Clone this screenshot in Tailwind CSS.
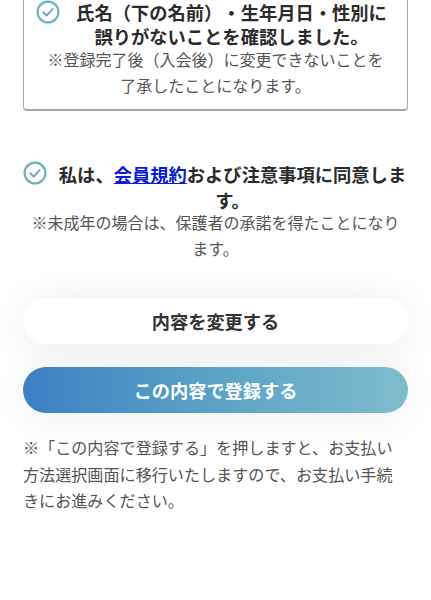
<!DOCTYPE html>
<html lang="ja">
<head>
  <meta charset="UTF-8" />
  <meta name="viewport" content="width=device-width, initial-scale=1.0" />
  <title>登録内容の確認</title>
  <script src="https://cdn.jsdelivr.net/npm/@tailwindcss/browser@4"></script>
</head>
<body class="bg-white text-[#333] h-[600px] overflow-hidden [text-spacing-trim:space-all] font-['Noto_Sans_CJK_JP','Noto_Sans',sans-serif]">

  <main class="px-[23px]">
    <!-- 確認ボックス (top is scrolled off) -->
    <section class="-mt-[20px] h-[131px] pt-[19px] border border-[#a8a8a8] border-b-2 rounded-[4px] text-center">
      <div class="flex items-start pl-[12px] pr-[18px]">
        <svg class="w-[24px] h-[24px] shrink-0" viewBox="0 0 24 24" fill="none">
          <circle cx="12" cy="12" r="10.4" stroke="#6fb3c9" stroke-width="2.2" />
          <path d="M7.2 12.2l3.4 3.4 6.2-6.6" stroke="#5c9fbe" stroke-width="1.8" stroke-linecap="round" stroke-linejoin="round" />
        </svg>
        <p class="flex-1 pl-[14px] text-[18.3px] leading-[24px] font-bold text-[#2b2b2b]">氏名（下の名前）・生年月日・性別に<br />誤りがないことを確認しました。</p>
      </div>
      <p class="-mt-[2px] text-[16px] leading-[26px] text-[#555]">※登録完了後（入会後）に変更できないことを<br />了承したことになります。</p>
    </section>

    <!-- 同意 -->
    <section class="mt-[50px] text-center">
      <div class="flex items-start">
        <svg class="w-[24px] h-[24px] shrink-0" viewBox="0 0 24 24" fill="none">
          <circle cx="12" cy="12" r="10.4" stroke="#6fb0ba" stroke-width="2.2" />
          <path d="M7.2 12.2l3.4 3.4 6.2-6.6" stroke="#5fa5b4" stroke-width="1.8" stroke-linecap="round" stroke-linejoin="round" />
        </svg>
        <p class="flex-1 pl-[10px] text-[18.3px] leading-[26px] font-bold text-[#2b2b2b]">私は、<a href="#" class="text-[#0a1ccf] underline">会員規約</a>および注意事項に同意しま<br />す。</p>
      </div>
      <p class="-mt-[4px] text-[16px] leading-[26px] text-[#555]">※未成年の場合は、保護者の承諾を得たことになり<br />ます。</p>
    </section>

    <!-- ボタン -->
    <div class="mt-[37px] flex flex-col gap-[23px]">
      <button class="h-[46px] pt-[2px] rounded-full bg-white text-[18.2px] font-bold text-[#333] shadow-[0_4px_40px_rgba(0,0,0,0.09)]">内容を変更する</button>
      <button class="h-[46px] pt-[2px] rounded-full bg-gradient-to-r from-[#3c7fc4] via-[#5ba3c4] to-[#7fbccd] text-[18.2px] font-bold text-white shadow-[0_4px_40px_rgba(0,0,0,0.07)]">この内容で登録する</button>
    </div>

    <p class="mt-[21px] text-[16.1px] leading-[26.5px] text-[#555]">※「この内容で登録する」を押しますと、お支払い<br />方法選択画面に移行いたしますので、お支払い手続<br />きにお進みください。</p>
  </main>

</body>
</html>
